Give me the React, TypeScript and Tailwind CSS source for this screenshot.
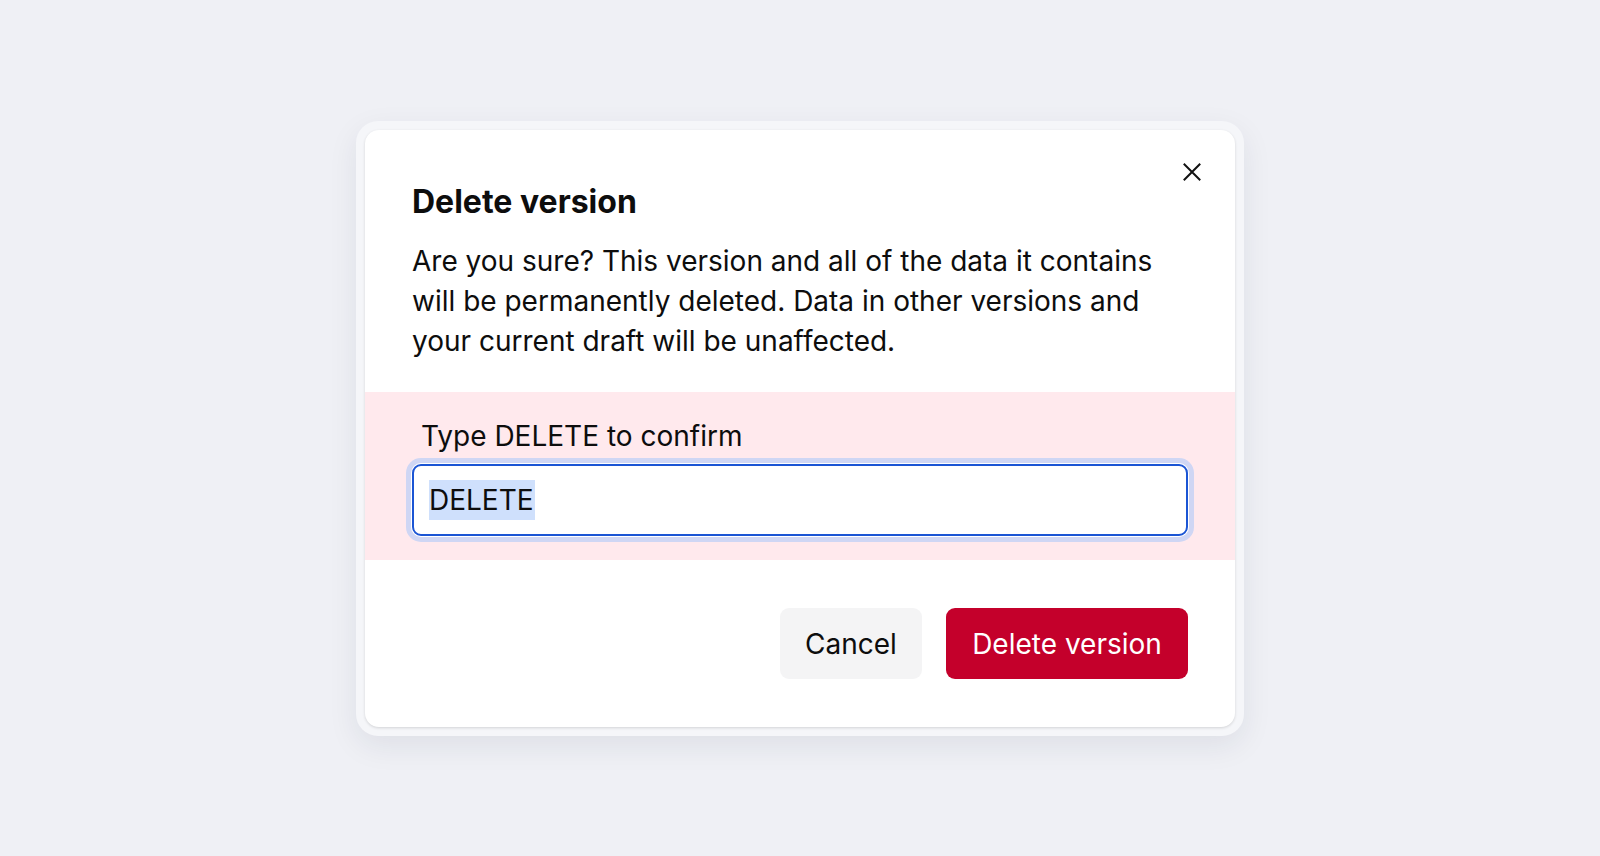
import React from "react";

export default function App() {
  return (
    <div
      className="w-full h-[856px] bg-[#eff0f5] flex items-center justify-center"
      style={{ fontFamily: "Inter, 'Noto Sans', sans-serif" }}
    >
      <div className="rounded-[22px] bg-[#f5f6f9] p-[9px] shadow-[0_10px_30px_rgba(30,35,60,0.08)]">
        <div className="relative w-[870px] bg-white rounded-[14px] shadow-[0_1px_3px_rgba(0,0,0,0.14)] overflow-hidden text-[#0d0d0d]">
          <button className="absolute top-[33px] right-[34px] w-[18px] h-[18px] flex items-center justify-center">
            <svg width="18" height="18" viewBox="0 0 18 18" fill="none">
              <path d="M1.5 1.5 L16.5 16.5 M16.5 1.5 L1.5 16.5" stroke="#111" strokeWidth="2" strokeLinecap="square" />
            </svg>
          </button>
          <div className="px-[47px] pt-[52px]">
            <h2 className="text-[32px] leading-[40px] font-bold">Delete version</h2>
            <p className="mt-[19px] max-w-[760px] text-[28px] leading-[40px]">
              Are you sure? This version and all of the data it contains will be permanently deleted. Data in other versions and your current draft will be unaffected.
            </p>
          </div>
          <div className="mt-[31px] bg-[#ffe9ed] px-[47px] pt-[24px] pb-[24px]">
            <div className="pl-[9px] text-[28px] leading-[40px]">Type DELETE to confirm</div>
            <div className="mt-[8px] h-[72px] rounded-[9px] border-2 border-[#1b55d4] bg-white shadow-[0_0_0_1px_#ffffff,0_0_0_6px_#cfd6f4] flex items-center px-[15px]">
              <span className="bg-[#cfe0fc] text-[28px] leading-[40px] pr-[1px]">DELETE</span>
            </div>
          </div>
          <div className="flex justify-end gap-[24px] px-[47px] pt-[48px] pb-[48px]">
            <button className="h-[71px] w-[142px] pt-[2px] rounded-[9px] bg-[#f4f4f5] text-[28px] text-[#0d0d0d]">Cancel</button>
            <button className="h-[71px] w-[242px] pt-[2px] rounded-[9px] bg-[#c4002b] text-[28px] text-white">Delete version</button>
          </div>
        </div>
      </div>
    </div>
  );
}
